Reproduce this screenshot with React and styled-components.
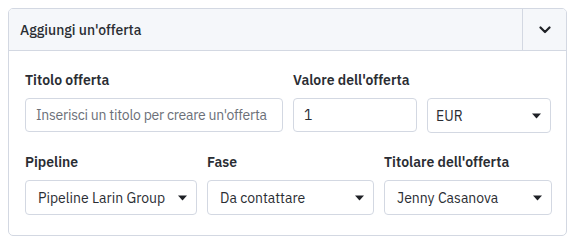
import styled, { createGlobalStyle } from "styled-components";

const GlobalStyle = createGlobalStyle`
  body {
    margin: 8px;
    background: #fff;
    font-family: "IBM Plex Sans", Roboto, "Noto Sans", sans-serif;
    color: #2a2d33;
  }
  * { box-sizing: border-box; }
`;

const Caret = () => (
  <svg width="9" height="6" viewBox="0 0 9 6">
    <path d="M0 0.5h9L4.5 5.5z" fill="#1f2126" />
  </svg>
);

const Chevron = () => (
  <svg width="12" height="8" viewBox="0 0 12 8">
    <path
      d="M1.5 1.5L6 6l4.5-4.5"
      fill="none"
      stroke="#1f2126"
      strokeWidth="2.2"
      strokeLinecap="round"
      strokeLinejoin="round"
    />
  </svg>
);

const App = () => {
  return (
    <>
      <GlobalStyle />
      <Card>
        <Header>
          <Title>Aggiungi un'offerta</Title>
          <Toggle>
            <Chevron />
          </Toggle>
        </Header>
        <Body>
          <TopRow>
            <Field>
              <Label>Titolo offerta</Label>
              <Input placeholder="Inserisci un titolo per creare un'offerta" />
            </Field>
            <Field>
              <Label>Valore dell'offerta</Label>
              <Pair>
                <Input defaultValue="1" />
                <Select $compact>
                  <span>EUR</span>
                  <Caret />
                </Select>
              </Pair>
            </Field>
          </TopRow>
          <BottomRow>
            <Field>
              <Label>Pipeline</Label>
              <Select>
                <span>Pipeline Larin Group</span>
                <Caret />
              </Select>
            </Field>
            <Field>
              <Label>Fase</Label>
              <Select>
                <span>Da contattare</span>
                <Caret />
              </Select>
            </Field>
            <Field>
              <Label>Titolare dell'offerta</Label>
              <Select>
                <span>Jenny Casanova</span>
                <Caret />
              </Select>
            </Field>
          </BottomRow>
        </Body>
      </Card>
    </>
  );
};

export default App;

const Card = styled.div`
  width: 559px;
  border: 1px solid #d3d8e2;
  border-radius: 5px;
  overflow: hidden;
`;

const Header = styled.div`
  display: flex;
  height: 42px;
  background-color: #f5f7fa;
  border-bottom: 1px solid #d3d8e2;
`;

const Title = styled.div`
  flex: 1;
  display: flex;
  align-items: center;
  padding-left: 11px;
  font-size: 14px;
  font-weight: 500;
`;

const Toggle = styled.div`
  width: 44px;
  display: flex;
  align-items: center;
  justify-content: center;
  border-left: 1px solid #d3d8e2;
`;

const Body = styled.div`
  padding: 20px 15px 20px 16px;
  display: flex;
  flex-direction: column;
  gap: 20px;
`;

const TopRow = styled.div`
  display: grid;
  grid-template-columns: 258px 258px;
  gap: 10px;
`;

const BottomRow = styled.div`
  display: grid;
  grid-template-columns: 172px 167px 168px;
  column-gap: 10px;
`;

const Field = styled.div`
  display: flex;
  flex-direction: column;
  gap: 9px;
`;

const Label = styled.label`
  font-size: 14px;
  line-height: 18px;
  font-weight: 600;
  color: #2a2d33;
`;

const Pair = styled.div`
  display: grid;
  grid-template-columns: 1fr 1fr;
  gap: 10px;
`;

const Input = styled.input`
  width: 100%;
  height: 34px;
  border: 1px solid #d3d8e2;
  border-radius: 4px;
  padding: 0 6px 0 10px;
  font-family: inherit;
  font-size: 14px;
  color: #2a2d33;
  outline: none;

  &::placeholder {
    color: #6b6f78;
    letter-spacing: -0.25px;
  }
`;

const Select = styled.div`
  height: 35px;
  display: flex;
  align-items: center;
  justify-content: space-between;
  padding: 0 9px 0 ${(p) => (p.$compact ? "8px" : "12px")};
  border: 1px solid #d3d8e2;
  border-radius: 4px;
  font-size: 14px;
  color: #2a2d33;
  white-space: nowrap;
`;
